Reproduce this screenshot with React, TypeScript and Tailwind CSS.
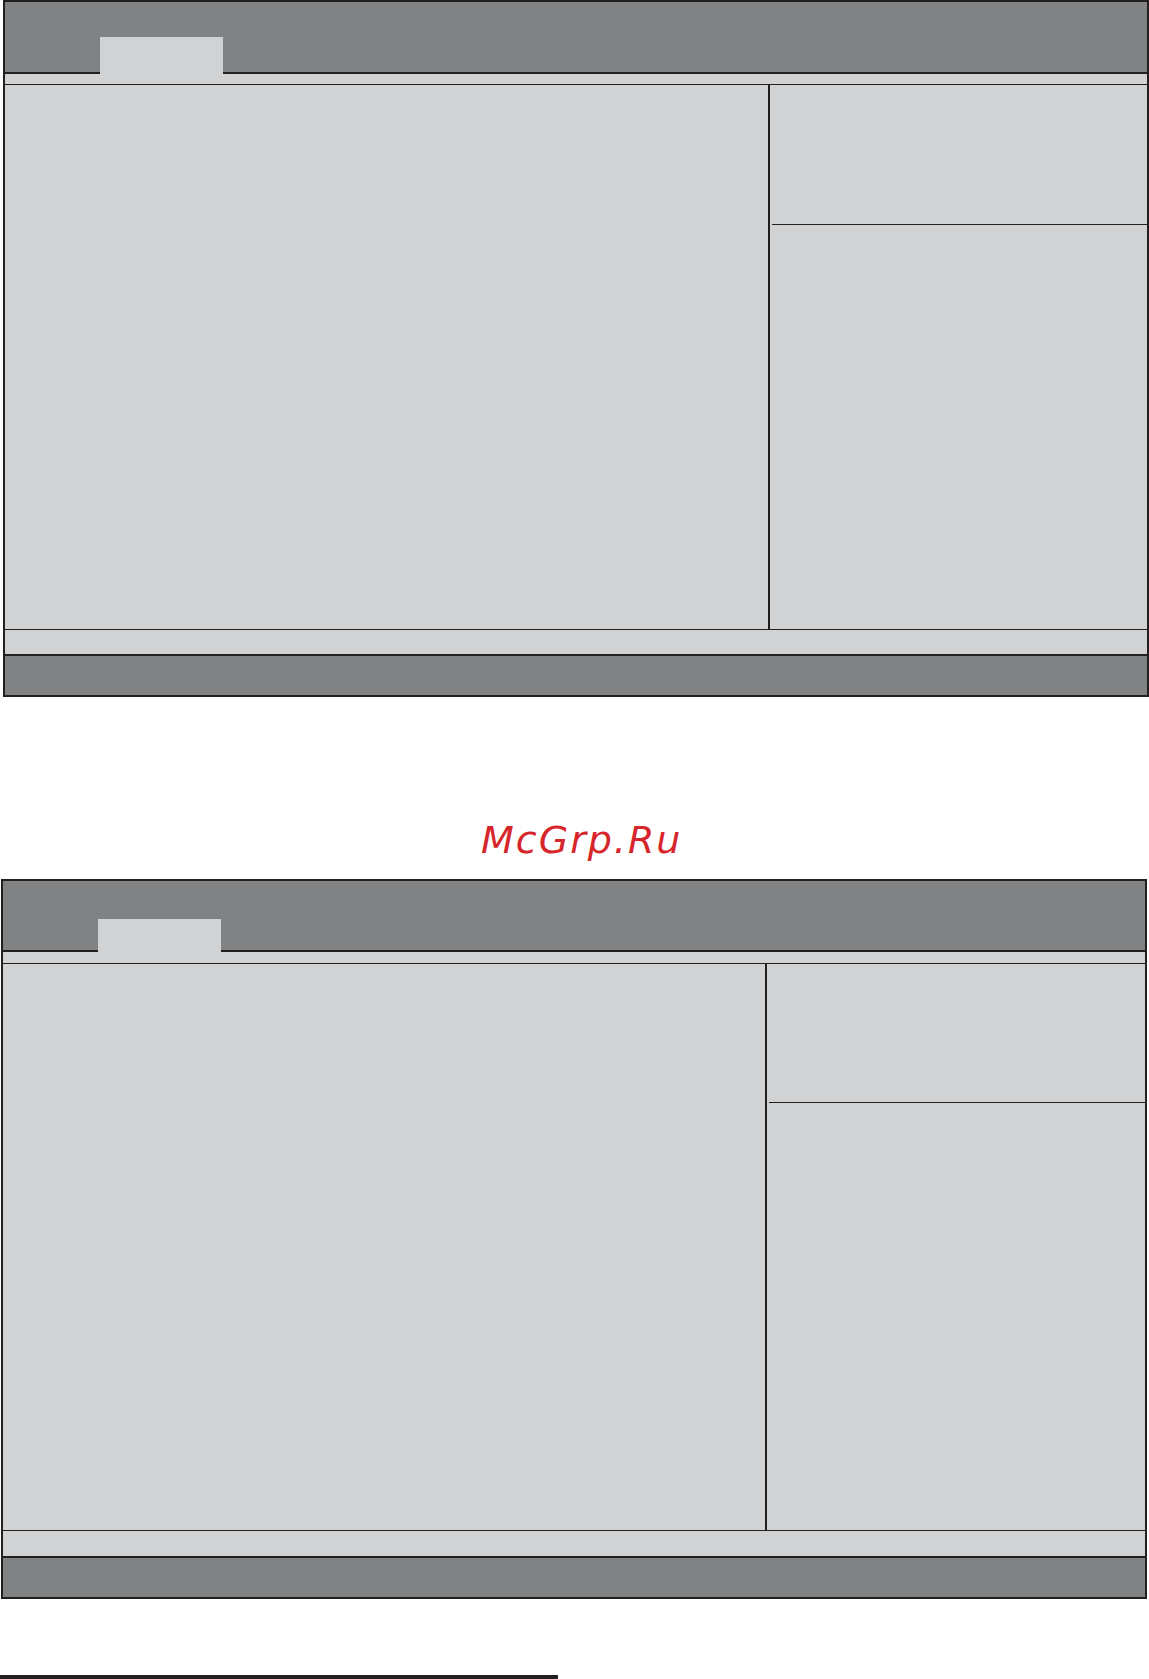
type PanelProps = {
  className: string;
  headerH: string;
  tabH: string;
  stripH: string;
  bodyH: string;
  leftW: string;
  topInfoH: string;
  footStripH: string;
};

// BIOS-style screen frame, empty template
function BiosFrame(p: PanelProps) {
  return (
    <div className={`border-2 border-[#231f20] bg-[#d1d2d4] flex flex-col ${p.className}`}>
      {/* header with the selected tab */}
      <div className={`bg-[#818284] flex items-end ${p.headerH}`}>
        <div className="w-[95px] h-[2px] bg-[#231f20]" />
        <div className={`w-[123px] bg-[#d1d2d4] ${p.tabH}`} />
        <div className="flex-1 h-[2px] bg-[#231f20]" />
      </div>
      <div className={p.stripH} />
      <div className="h-px bg-[#231f20]" />

      <div className={`flex ${p.bodyH}`}>
        <div className={p.leftW} />
        <div className="w-[2px] bg-[#231f20]" />
        <div className="flex-1 flex flex-col">
          <div className={p.topInfoH} />
          <div className="h-px bg-[#231f20] ml-[2px]" />
          <div className="flex-1" />
        </div>
      </div>

      <div className="h-px bg-[#231f20]" />
      <div className={p.footStripH} />
      <div className="h-[2px] bg-[#231f20]" />
      <div className="h-[39px] bg-[#818284]" />
    </div>
  );
}

export default function App() {
  return (
    <div className="w-[1149px] h-[1679px] bg-white overflow-hidden">
      <BiosFrame
        className="ml-[3px] w-[1146px]"
        headerH="h-[72px]"
        tabH="h-[37px]"
        stripH="h-[10px]"
        bodyH="h-[544px]"
        leftW="w-[763px]"
        topInfoH="h-[139px]"
        footStripH="h-[24px]"
      />

      <div
        className="mt-[124px] h-[38px] pl-[481px] text-[38px] leading-none italic tracking-[2px] text-[#d7262b]"
        style={{ fontFamily: '"DejaVu Sans", "Liberation Sans", sans-serif' }}
      >
        McGrp.Ru
      </div>

      <BiosFrame
        className="mt-[20px] ml-px w-[1146px]"
        headerH="h-[71px]"
        tabH="h-[33px]"
        stripH="h-[11px]"
        bodyH="h-[566px]"
        leftW="w-[762px]"
        topInfoH="h-[138px]"
        footStripH="h-[25px]"
      />

      <div className="mt-[76px] w-[558px] h-[4px] bg-[#231f20]" />
    </div>
  );
}
